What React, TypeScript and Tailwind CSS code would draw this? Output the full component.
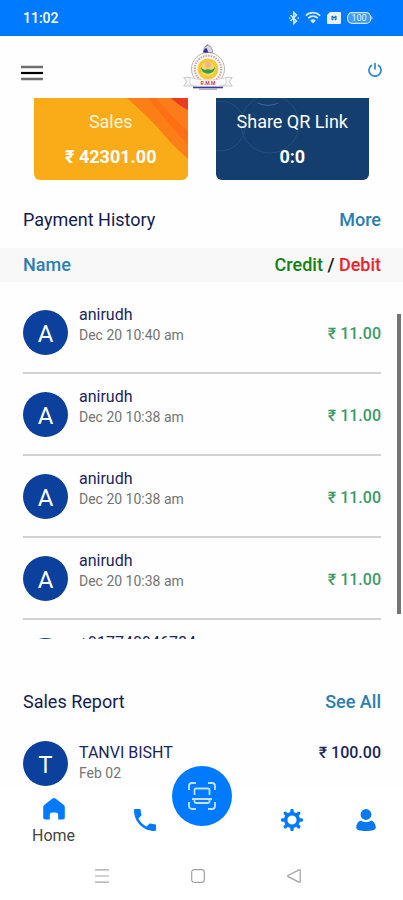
import React from 'react';

interface Payment {
  id: number;
  name: string;
  letter?: string;
  date?: string;
  amount?: string;
}

const payments: Payment[] = [
  { id: 1, name: 'anirudh', letter: 'A', date: 'Dec 20 10:40 am', amount: '11.00' },
  { id: 2, name: 'anirudh', letter: 'A', date: 'Dec 20 10:38 am', amount: '11.00' },
  { id: 3, name: 'anirudh', letter: 'A', date: 'Dec 20 10:38 am', amount: '11.00' },
  { id: 4, name: 'anirudh', letter: 'A', date: 'Dec 20 10:38 am', amount: '11.00' },
  { id: 5, name: '+917740946784' },
];

const StatusBar = () => (
  <div className="flex h-9 items-center justify-between bg-[#007bff] pl-[23px] pr-[30px] text-white">
    <span className="text-sm font-medium">11:02</span>
    <div className="flex items-center gap-1.5">
      <svg className="h-3.5 w-2.5" viewBox="0 0 10 14" fill="none" stroke="#d6eaff" strokeWidth="1.5">
        <path d="M1.500 4l6 6L4.800 12.600V1.400L7.500 4l-6 6" />
        <path d="M0 7h1.300M8.700 7H10" />
      </svg>
      <svg className="h-3.5 w-4" viewBox="0 0 16 14" fill="none" stroke="#d6eaff" strokeWidth="1.800">
        <path d="M.8 4.600C5 .6 11 .6 15.200 4.600M3.200 7.200c2.800-2.600 6.800-2.600 9.600 0" />
        <path d="M5.200 9.400c1.700-1.500 3.900-1.500 5.600 0L8 12.600z" fill="#d6eaff" stroke="none" />
      </svg>
      <svg className="h-3 w-3.5" viewBox="0 0 14 12">
        <path d="M3 0h10a1 1 0 0 1 1 1v10a1 1 0 0 1-1 1H1a1 1 0 0 1-1-1V3z" fill="#e6f3ff" />
        <path d="M5 4l4 4M9 4L5 8M5 4v4M9 4v4" stroke="#1b6fc4" strokeWidth="1.100" />
      </svg>
      <svg className="h-3 w-[26px]" viewBox="0 0 26 12">
        <rect x=".6" y=".6" width="23" height="10.800" rx="4.500" fill="#3f9aff" stroke="#cfe6ff" strokeWidth="1.100" />
        <path d="M24.500 4c1.300.6 1.300 3.400 0 4z" fill="#cfe6ff" />
        <text x="12" y="9.300" textAnchor="middle" fontSize="9" fill="#e6f3ff">100</text>
      </svg>
    </div>
  </div>
);

const Logo = () => (
  <svg className="h-[46px] w-[50px]" viewBox="0 0 50 46">
    <circle cx="25" cy="25" r="16.500" fill="#fdfbf7" stroke="#b9b6bd" strokeWidth="1" />
    <circle cx="25" cy="25" r="13.300" fill="none" stroke="#d5a098" strokeWidth="2" strokeDasharray="1.500 1.100" />
    <circle cx="25" cy="25" r="10.500" fill="#f6c93a" />
    <circle cx="25" cy="25" r="7" fill="#f9d766" />
    <circle cx="25" cy="21" r="3" fill="#f3b28c" />
    <path d="M18 23c2 3 5 3.500 7 2 2 1.500 5 1 7-2 0 4-3 6.500-7 6.500S18 27 18 23z" fill="#2fa044" />
    <path d="M20.500 8.500C20.500 4 22 2 25 1c3 1 4.500 3.500 4.500 7.500z" fill="#d9d8e3" stroke="#77758c" strokeWidth=".7" />
    <path d="M20.500 8.500c0-2.500 1-4 3-4.500l2 4.500z" fill="#33318f" />
    <path d="M25 1c-2 0-2.500 1-2 2" stroke="#77758c" fill="none" />
    <path d="M8 33.500H.8l3 4-3 4.500H12M42 33.500h7.200l-3 4 3 4.500H38" fill="#f7f7f9" stroke="#bcbac3" strokeWidth=".8" />
    <path d="M7 33.500c11 3.500 25 3.500 36 0v7c-11 3-25 3-36 0z" fill="#fff" stroke="#c6c4cc" strokeWidth=".7" />
    <text x="25" y="40.500" textAnchor="middle" fontSize="5" fontWeight="700" fill="#c8404c">R.M.M</text>
    <path d="M10 43.500h30" stroke="#3d3b92" strokeWidth="1.600" />
    <path d="M16 45.200h18" stroke="#8b8abf" strokeWidth="1" />
  </svg>
);

const Header = () => (
  <header className="grid h-[62px] grid-cols-[1fr_auto_1fr] items-center pl-[21px] pr-2">
    <button type="button" aria-label="Menu" className="mt-3 justify-self-start">
      <svg className="h-4 w-[22px]" viewBox="0 0 22 16">
        <path d="M0 2h22M0 14h22" stroke="#6e6e6e" strokeWidth="2.500" />
        <path d="M0 8h22" stroke="#000" strokeWidth="2.200" />
      </svg>
    </button>
    <Logo />
    <button type="button" aria-label="Log out" className="mr-[13px] mt-1.5 justify-self-end">
      <svg className="h-3.5 w-3.5" viewBox="0 0 14 14" fill="none" stroke="#2b84d8" strokeWidth="1.700">
        <path d="M4 2A6 6 0 1 0 10 2" />
        <path d="M7 0v6.500" />
      </svg>
    </button>
  </header>
);

const Cards = () => (
  <section className="grid grid-cols-2 gap-7 px-[34px] text-center text-white">
    <div className="relative h-[82px] overflow-hidden rounded-b-md bg-[#f9ab18]">
      <svg className="absolute right-0 top-0 h-[82px] w-[66px]" viewBox="0 0 66 82">
        <path d="M5 0h61v61C54 50 46 42 36 30 26 19 17 11 5 0z" fill="#fb7f16" />
        <path d="M26 0h40v46C53 35 40 16 26 0z" fill="#ff6f14" />
        <path d="M34 0h32v33C56 25 45 13 34 0z" fill="#fc7c1b" />
        <path d="M49 0h17v12C60 9 54 5 49 0z" fill="#ee3a20" />
      </svg>
      <div className="relative flex flex-col gap-[11px] pt-3">
        <p className="text-lg leading-6 text-[#fff3dc]">Sales</p>
        <p className="text-lg font-bold leading-6">₹ 42301.00</p>
      </div>
    </div>
    <div className="relative h-[82px] overflow-hidden rounded-b-md bg-[#143e6e]">
      <svg className="absolute left-0 top-0 h-[82px] w-[100px]" viewBox="0 0 100 82" fill="none" stroke="#24507f" strokeWidth="1">
        <circle cx="54" cy="26" r="29" />
        <circle cx="4" cy="28" r="25" />
        <path d="M42 5c6 3 14 3 20 0" stroke="#3f6c9c" />
      </svg>
      <div className="relative flex flex-col gap-[11px] pt-3">
        <p className="text-lg leading-6">Share QR Link</p>
        <p className="text-lg font-bold leading-6">0:0</p>
      </div>
    </div>
  </section>
);

const Avatar = ({ letter }: { letter?: string }) => (
  <div className="flex h-[45px] w-[45px] shrink-0 items-center justify-center rounded-full bg-[#0b409c] pt-0.5 text-2xl text-white">
    {letter}
  </div>
);

const PaymentHistory = () => (
  <section>
    <div className="flex items-center justify-between pb-4 pl-[23px] pr-[22px] pt-7 text-lg leading-6">
      <h2 className="text-[#141c50]">Payment History</h2>
      <a href="#history" className="font-medium text-[#2a7fb0]">More</a>
    </div>
    <div className="flex h-[34px] items-center justify-between bg-[#f8f8f8] pl-[23px] pr-[22px] text-lg font-medium">
      <span className="text-[#2a7fb5]">Name</span>
      <span className="text-[#111]">
        <span className="text-[#128012]">Credit</span> / <span className="text-[#f0202a]">Debit</span>
      </span>
    </div>
    <div className="relative h-[357px] overflow-hidden pl-[23px] pr-[22px] pt-2.5">
      <ul>
        {payments.map((p) => (
          <li key={p.id} className="flex h-[82px] gap-[11px] border-b-2 border-[#d2d2d2] pt-[13px]">
            <div className="pt-[5px]">
              <Avatar letter={p.letter} />
            </div>
            <div className="flex-1">
              <p className="text-base leading-5 text-[#1b255c]">{p.name}</p>
              {p.date && <p className="text-sm leading-5 text-[#747474]">{p.date}</p>}
            </div>
            {p.amount && <p className="pt-[17px] text-base font-medium leading-6 text-[#3a9a68]">₹ {p.amount}</p>}
          </li>
        ))}
      </ul>
      {/* scroll thumb */}
      <div className="absolute right-0.5 top-8 h-[300px] w-1 bg-[#757575]" />
    </div>
  </section>
);

const SalesReport = () => (
  <section className="pl-[23px] pr-[22px] pt-[51px]">
    <div className="flex items-center justify-between text-lg leading-6">
      <h2 className="text-[#141c50]">Sales Report</h2>
      <a href="#sales" className="font-medium text-[#2a7fb0]">See All</a>
    </div>
    <div className="flex gap-[11px] pt-[27px]">
      <Avatar letter="T" />
      <div className="flex-1">
        <p className="text-base leading-6 text-[#1b255c]">TANVI BISHT</p>
        <p className="text-sm leading-4 text-[#747474]">Feb 02</p>
      </div>
      <p className="text-base font-medium leading-6 text-[#1b255c]">₹ 100.00</p>
    </div>
  </section>
);

const BottomNav = () => (
  <nav className="relative flex h-16 items-center justify-between bg-white pl-8 pr-[27px]">
    <div className="flex items-center gap-[59px]">
      <button type="button" className="flex flex-col items-center gap-1 pt-2.5 text-base leading-6 text-[#444]">
        <svg className="h-[22px] w-[22px]" viewBox="0 0 22 22" fill="#007bff">
          <path d="M9.500.6a2.500 2.500 0 0 1 3 0l8 6.200A3 3 0 0 1 21.800 9v10.500a2 2 0 0 1-2 2h-4.600V17a2.500 2.500 0 0 0-2.500-2.500h-3.400A2.500 2.500 0 0 0 6.800 17v4.500H2.200a2 2 0 0 1-2-2V9a3 3 0 0 1 1.300-2.200z" />
        </svg>
        Home
      </button>
      <button type="button" aria-label="Call" className="pt-1">
        <svg className="h-[22px] w-[22px]" viewBox="3 3 18 18" fill="#007bff">
          <path d="M6.620 10.790c1.440 2.830 3.760 5.140 6.590 6.590l2.200-2.200c.27-.27.670-.36 1.020-.24 1.120.37 2.330.57 3.570.57.550 0 1 .45 1 1V20c0 .55-.45 1-1 1-9.390 0-17-7.610-17-17 0-.55.45-1 1-1h3.500c.55 0 1 .45 1 1 0 1.250.2 2.450.57 3.570.11.35.03.74-.25 1.020z" />
        </svg>
      </button>
    </div>
    <button
      type="button"
      aria-label="Scan"
      className="absolute -top-5 left-1/2 flex h-[60px] w-[60px] -translate-x-1/2 items-center justify-center rounded-full bg-[#007bff]"
    >
      <svg className="h-7 w-7" viewBox="0 0 28 28" fill="none" stroke="#bfe0ff" strokeWidth="1.800">
        <path d="M1 8V4a3 3 0 0 1 3-3h4M20 1h4a3 3 0 0 1 3 3v4M27 20v4a3 3 0 0 1-3 3h-4M8 27H4a3 3 0 0 1-3-3v-4" />
        <path d="M6.500 13V8A1.500 1.500 0 0 1 8 6.500h12A1.500 1.500 0 0 1 21.500 8v5M4 17h20M6.500 17v2.500A1.500 1.500 0 0 0 8 21h12a1.500 1.500 0 0 0 1.500-1.500V17" />
      </svg>
    </button>
    <div className="flex items-center gap-[53px] pt-1">
      <button type="button" aria-label="Settings">
        <svg className="h-[22px] w-[22px]" viewBox="0 0 22 22" fill="none" stroke="#007bff">
          <circle cx="11" cy="11" r="6.300" strokeWidth="3.400" />
          <path
            d="M11 1.500v3M11 17.500v3M1.500 11h3M17.500 11h3M4.300 4.300l2 2M15.700 15.700l2 2M4.300 17.700l2-2M15.700 6.300l2-2"
            strokeWidth="3.400"
            strokeLinecap="round"
          />
        </svg>
      </button>
      <button type="button" aria-label="Profile">
        <svg className="h-[22px] w-5" viewBox="0 0 20 22" fill="#0a78f0">
          <circle cx="10" cy="5.500" r="5.400" />
          <path d="M4.800 11.500c3.200 2 7.200 2 10.400 0 3 1 4.600 4 4.600 7 0 2.500-4 3.500-9.800 3.500S.2 21 .2 18.500c0-3 1.600-6 4.600-7z" />
        </svg>
      </button>
    </div>
  </nav>
);

const SystemNav = () => (
  <div className="flex h-[49px] items-center justify-center gap-[82px] bg-white pr-2 pt-0.5">
    <button type="button" aria-label="Recent apps">
      <svg className="h-3.5 w-3.5" viewBox="0 0 14 14" stroke="#a5a5a5" strokeWidth="1.200">
        <path d="M0 .8h14M0 7h14M0 13.200h14" />
      </svg>
    </button>
    <button type="button" aria-label="Home screen">
      <svg className="h-3.5 w-3.5" viewBox="0 0 14 14" fill="none" stroke="#a0a0a0" strokeWidth="1.200">
        <rect x=".7" y=".7" width="12.600" height="12.600" rx="2.500" />
      </svg>
    </button>
    <button type="button" aria-label="Back">
      <svg className="h-3.5 w-3.5" viewBox="0 0 14 14" fill="none" stroke="#a0a0a0" strokeWidth="1.200" strokeLinejoin="round">
        <path d="M13.200 1.500v11c0 .8-.6 1-1.200.6L1 7.600c-.5-.3-.5-.8 0-1.100L12 .9c.6-.3 1.200 0 1.200.6z" />
      </svg>
    </button>
  </div>
);

const App = () => {
  return (
    <div className="w-full bg-[#fefefe] font-[Roboto,'Noto_Sans',sans-serif]">
      <StatusBar />
      <Header />
      <main>
        <Cards />
        <PaymentHistory />
        <SalesReport />
      </main>
      <BottomNav />
      <SystemNav />
    </div>
  );
};

export default App;
